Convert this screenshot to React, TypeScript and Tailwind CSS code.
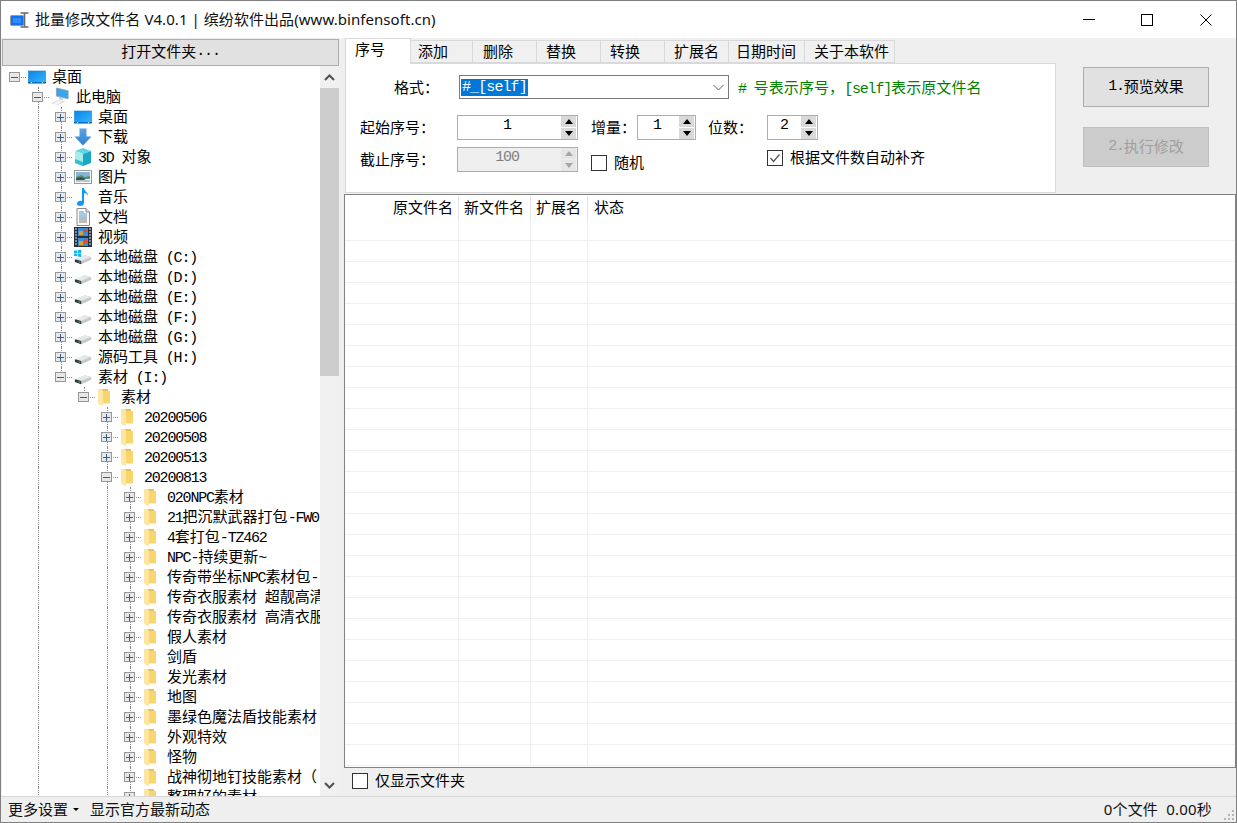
import React from "react";

type RowData = { l: number; t: string; icon: string; open?: boolean; guides?: number[]; end?: boolean };

// splits ascii runs so they get the half width mono face
const T = ({ s }: { s: string }) => (
    <>
        {s.split(/([\x20-\x7e]+)/).map((p, i) =>
            /^[\x20-\x7e]+$/.test(p) ? (
                <span key={i} className="font-['Liberation_Mono'] text-[15px] leading-none tracking-[-1.2px] whitespace-pre">
                    {p}
                </span>
            ) : (
                p
            ),
        )}
    </>
);

const DesktopIcon = () => (
    <svg width="18" height="18" viewBox="0 0 18 18">
        <defs>
            <linearGradient id="dk" x1="0" y1="0" x2="1" y2="1">
                <stop offset="0" stopColor="#0a86e6" />
                <stop offset="1" stopColor="#36b6ff" />
            </linearGradient>
        </defs>
        <rect x="0.5" y="3" width="17" height="12" fill="url(#dk)" stroke="#0f7fd2" strokeWidth="0.6" />
        <rect x="0" y="14" width="18" height="1.4" fill="#0b6fc0" />
        <rect x="3" y="14.2" width="1" height="1" fill="#fff" />
        <rect x="14" y="14.2" width="1" height="1" fill="#fff" />
    </svg>
);

const PcIcon = () => (
    <svg width="20" height="20" viewBox="0 0 20 20">
        <path d="M6 0l13 3v9L6 9z" fill="#3aa5ec" stroke="#8a98a4" strokeWidth="0.8" />
        <path d="M9 9.500l4 1v3l-4-1z" fill="#c4cad0" />
        <path d="M0 17l8-4 8 2-8 4z" fill="#d9dcdf" />
        <path d="M2 17l6-3 5 1.300-6 3z" fill="#f4f5f6" />
    </svg>
);

const ArrowIcon = () => (
    <svg width="18" height="18" viewBox="0 0 18 18">
        <defs>
            <linearGradient id="dl" x1="0" y1="0" x2="0" y2="1">
                <stop offset="0" stopColor="#5aa5e6" />
                <stop offset="1" stopColor="#2d7fd0" />
            </linearGradient>
        </defs>
        <path d="M5.5 0.5h7v8h5L9 17.5 0.5 8.5h5z" fill="url(#dl)" />
    </svg>
);

const CubeIcon = () => (
    <svg width="18" height="18" viewBox="0 0 18 18">
        <path d="M9 0l8 3-8 3-8-3z" fill="#5fd6e6" />
        <path d="M1 3l8 3v12l-8-3z" fill="#a9ece8" />
        <path d="M17 3L9 6v12l8-3z" fill="#1aa6c4" />
        <path d="M1 11l8 3v4l-8-3z" fill="#2fc0d2" />
    </svg>
);

const PictureIcon = () => (
    <svg width="18" height="18" viewBox="0 0 18 18">
        <rect x="0.5" y="2.5" width="17" height="13" fill="#fff" stroke="#9a9a9a" />
        <rect x="2" y="4" width="14" height="5" fill="#86b6d8" />
        <path d="M2 9l5-2 4 2 5-1v3H2z" fill="#5d8f80" />
        <path d="M2 10l5-1 5 2-2 1H2z" fill="#2f5a4c" />
        <rect x="2" y="12" width="14" height="2" fill="#b9c6c6" />
    </svg>
);

const NoteIcon = () => (
    <svg width="18" height="18" viewBox="0 0 18 18">
        <path d="M8 0h2c0 3 4 4 4 8-1-2-2-3-4-3v10c0 2-2 3-4 3s-3-1-3-2.500 2-3.500 5-2.500z" fill="#0f9af0" />
    </svg>
);

const DocIcon = () => (
    <svg width="18" height="18" viewBox="0 0 18 18">
        <path d="M3 0.500h9l3.500 3.500v13.500H3z" fill="#fafafa" stroke="#8a8a8a" />
        <path d="M12 0.500v3.500h3.500" fill="#dcdcdc" stroke="#8a8a8a" />
        <path d="M5 4h5M5 6h8M5 8h8" stroke="#4a9ad4" />
        <path d="M5 10h8M5 12h8M5 14h8" stroke="#7c7c7c" />
    </svg>
);

const FilmIcon = () => (
    <svg width="18" height="20" viewBox="0 0 18 20">
        <rect x="0" y="0" width="18" height="20" fill="#26303c" />
        <rect x="4" y="1" width="10" height="8" fill="#3a8edc" />
        <rect x="4" y="11" width="10" height="8" fill="#3a8edc" />
        <rect x="5" y="4" width="4" height="4" fill="#d8a030" />
        <rect x="9" y="2" width="4" height="3" fill="#d85030" />
        <rect x="5" y="14" width="4" height="4" fill="#d8a030" />
        <rect x="10" y="12" width="3" height="4" fill="#d85030" />
        <path d="M1 2h2M1 5h2M1 8h2M1 11h2M1 14h2M1 17h2M15 2h2M15 5h2M15 8h2M15 11h2M15 14h2M15 17h2" stroke="#e6e6e6" />
    </svg>
);

const DriveIcon = ({ win }: { win?: boolean }) => (
    <svg width="20" height="20" viewBox="0 0 20 20">
        <path d="M1 13l11-5 7 2v3L8 18l-7-3z" fill="#c4c7ca" />
        <path d="M1 12.500l11-4.500 7 2-11 4.500z" fill="#e6e8ea" />
        <path d="M1 12.500l7 2V18l-7-2.500z" fill="#32393d" />
        <rect x="5" y="15" width="2" height="1.200" fill="#36c060" />
        {win && <path d="M0 3l3.500-.5V5.500H0zM4.200 2.400L8 2v3.500H4.200zM0 6.200h3.500v3L0 8.800zM4.200 6.200H8V10l-3.800-.6z" fill="#12b4ef" />}
    </svg>
);

const FolderIcon = () => (
    <svg width="18" height="18" viewBox="0 0 18 18">
        <path d="M2 1h9v14H4z" fill="#eebf4e" />
        <path d="M6 3h7v12.500H6z" fill="#f9d56e" />
        <path d="M1 1h4l1 2v15l-4-1.500L1 15z" fill="#fde6a2" />
    </svg>
);

const AppIcon = () => (
    <svg width="20" height="20" viewBox="0 0 20 20">
        <rect x="0.500" y="5.500" width="13" height="10" rx="1" fill="#1472ea" stroke="#9a9a9a" />
        <rect x="3" y="8" width="8" height="5" fill="#2f8cff" />
        <path d="M10.500 3h8M10.500 17h8M14.500 3v14" stroke="#6a6a6a" strokeWidth="1.600" fill="none" />
    </svg>
);

const icons: Record<string, React.ReactNode> = {
    desktop: <DesktopIcon />,
    pc: <PcIcon />,
    arrow: <ArrowIcon />,
    cube: <CubeIcon />,
    pic: <PictureIcon />,
    note: <NoteIcon />,
    doc: <DocIcon />,
    film: <FilmIcon />,
    win: <DriveIcon win />,
    drive: <DriveIcon />,
    folder: <FolderIcon />,
};

const lv2 = { l: 2, guides: [1] };
const lv4 = { l: 4, icon: "folder", guides: [1] };
const lv5 = { l: 5, icon: "folder", guides: [1, 4] };

const rows: RowData[] = [
    { l: 0, t: "桌面", icon: "desktop", open: true },
    { l: 1, t: "此电脑", icon: "pc", open: true },
    { ...lv2, t: "桌面", icon: "desktop" },
    { ...lv2, t: "下载", icon: "arrow" },
    { ...lv2, t: "3D 对象", icon: "cube" },
    { ...lv2, t: "图片", icon: "pic" },
    { ...lv2, t: "音乐", icon: "note" },
    { ...lv2, t: "文档", icon: "doc" },
    { ...lv2, t: "视频", icon: "film" },
    { ...lv2, t: "本地磁盘 (C:)", icon: "win" },
    { ...lv2, t: "本地磁盘 (D:)", icon: "drive" },
    { ...lv2, t: "本地磁盘 (E:)", icon: "drive" },
    { ...lv2, t: "本地磁盘 (F:)", icon: "drive" },
    { ...lv2, t: "本地磁盘 (G:)", icon: "drive" },
    { ...lv2, t: "源码工具 (H:)", icon: "drive" },
    { ...lv2, t: "素材 (I:)", icon: "drive", open: true, end: true },
    { l: 3, t: "素材", icon: "folder", open: true, guides: [1], end: true },
    { ...lv4, t: "20200506" },
    { ...lv4, t: "20200508" },
    { ...lv4, t: "20200513" },
    { ...lv4, t: "20200813", open: true },
    { ...lv5, t: "020NPC素材" },
    { ...lv5, t: "21把沉默武器打包-FW0" },
    { ...lv5, t: "4套打包-TZ462" },
    { ...lv5, t: "NPC-持续更新~" },
    { ...lv5, t: "传奇带坐标NPC素材包-" },
    { ...lv5, t: "传奇衣服素材 超靓高清" },
    { ...lv5, t: "传奇衣服素材 高清衣服" },
    { ...lv5, t: "假人素材" },
    { ...lv5, t: "剑盾" },
    { ...lv5, t: "发光素材" },
    { ...lv5, t: "地图" },
    { ...lv5, t: "墨绿色魔法盾技能素材" },
    { ...lv5, t: "外观特效" },
    { ...lv5, t: "怪物" },
    { ...lv5, t: "战神彻地钉技能素材（" },
    { ...lv5, t: "整理好的素材" },
];

const TreeRow = ({ row }: { row: RowData }) => (
    <div className="flex h-5 shrink-0 items-center whitespace-nowrap pl-[2px]">
        {Array.from({ length: row.l }).map((_, i) => (
            <div key={i} className="h-full w-[23px] shrink-0">
                {row.guides?.includes(i) ? <div className="ml-[11px] h-full border-l border-dotted border-[#8a8a8a]" /> : null}
            </div>
        ))}
        <div className="relative flex h-full w-[23px] shrink-0 items-center pl-[5px]">
            {row.l > 0 && (
                <div
                    className={
                        row.end
                            ? "absolute left-[11px] top-0 h-1/2 border-l border-dotted border-[#8a8a8a]"
                            : "absolute left-[11px] inset-y-0 border-l border-dotted border-[#8a8a8a]"
                    }
                />
            )}
            <div className="relative flex h-[10px] w-[11px] items-center justify-center border border-[#969696] bg-[#e8e8e8]">
                <div className="absolute h-px w-[7px] bg-[#3a5a94]" />
                {!row.open && <div className="absolute h-[7px] w-px bg-[#3a5a94]" />}
            </div>
            <div className="ml-px w-[5px] border-t border-dotted border-[#8a8a8a]" />
        </div>
        <div className="ml-px flex h-5 w-[18px] shrink-0 items-center justify-center">{icons[row.icon]}</div>
        <div className={`mb-[2px] text-[15px] leading-[18px] text-black ${row.l === 1 ? "ml-[7px]" : "ml-[6px]"}`}>
            <T s={row.t} />
        </div>
    </div>
);

const Spin = ({ value, w, pr, off }: { value: string; w: string; pr: string; off?: boolean }) => (
    <div className={`flex h-[25px] items-center border border-[#adadad] ${w} ${off ? "bg-[#efefef]" : "bg-white"}`}>
        <div className={`flex-1 pb-[3px] text-center font-['Liberation_Mono'] text-[15px] tracking-[-1.2px] ${pr} ${off ? "text-[#7f7f7f]" : "text-black"}`}>
            {value}
        </div>
        <div className="mr-px flex h-[23px] w-[15px] flex-col gap-px">
            <div className={`flex flex-1 items-center justify-center ${off ? "bg-[#e6e6e6]" : "bg-[#d9d9d9]"}`}>
                <div className={`h-0 w-0 border-x-4 border-b-[5px] border-x-transparent ${off ? "border-b-[#a6a6a6]" : "border-b-black"}`} />
            </div>
            <div className={`flex flex-1 items-center justify-center ${off ? "bg-[#e6e6e6]" : "bg-[#d9d9d9]"}`}>
                <div className={`h-0 w-0 border-x-4 border-t-[5px] border-x-transparent ${off ? "border-t-[#a6a6a6]" : "border-t-black"}`} />
            </div>
        </div>
    </div>
);

const Check = ({ on }: { on?: boolean }) => (
    <div className="flex h-4 w-4 shrink-0 items-center justify-center border border-[#333333] bg-white">
        {on && (
            <svg width="14" height="14" viewBox="0 0 14 14">
                <path d="M2.500 7l3 3.500 6-7" fill="none" stroke="#555555" strokeWidth="1.300" />
            </svg>
        )}
    </div>
);

const tabs = [
    ["添加", "w-[62px] pl-[7px]"],
    ["删除", "w-[64px] pl-[10px]"],
    ["替换", "w-[64px] pl-[9px]"],
    ["转换", "w-[64px] pl-[9px]"],
    ["扩展名", "w-[64px] pl-[9px]"],
    ["日期时间", "w-[76px] pl-[7px]"],
    ["关于本软件", "w-[90px] pl-[9px]"],
];

export default function App() {
    return (
        <div className="flex h-[823px] w-[1237px] flex-col overflow-hidden border border-[#7f7f7f] bg-[#efefef] font-['Noto_Sans_CJK_SC',sans-serif] text-[15px] text-black">
            {/* title bar */}
            <div className="flex h-[37px] shrink-0 items-center bg-white">
                <div className="ml-[9px] mr-[5px]">
                    <AppIcon />
                </div>
                <span className="font-['Noto_Sans','Noto_Sans_CJK_SC',sans-serif] text-[15px] tracking-[0.06px] text-[#111111]">
                    批量修改文件名 V4.0.1 | 缤纷软件出品(www.binfensoft.cn)
                </span>
                <div className="ml-auto flex h-full items-center">
                    <div className="flex h-full w-[58px] items-center justify-center">
                        <div className="h-px w-3 bg-black" />
                    </div>
                    <div className="flex h-full w-[58px] items-center justify-center">
                        <div className="h-3 w-3 border border-black" />
                    </div>
                    <div className="flex h-full w-[60px] items-center justify-center">
                        <svg width="12" height="12" viewBox="0 0 12 12">
                            <path d="M0.500 0.500l11 11M11.500 0.500l-11 11" stroke="#000" fill="none" />
                        </svg>
                    </div>
                </div>
            </div>

            <div className="flex min-h-0 flex-1">
                {/* left pane */}
                <div className="flex w-[338px] shrink-0 flex-col pl-px">
                    <div className="mt-px flex h-[27px] shrink-0 items-center justify-center border border-[#adadad] bg-[#e1e1e1] pb-[2px] text-[15px]">
                        <T s="打开文件夹..." />
                    </div>
                    <div className="flex min-h-0 flex-1">
                        <div className="min-w-0 flex-1 overflow-hidden bg-white pt-px">
                            {rows.map((r) => (
                                <TreeRow key={r.t + r.l + r.icon} row={r} />
                            ))}
                        </div>
                        <div className="flex w-[19px] shrink-0 flex-col bg-[#f0f0f0]">
                            <div className="flex h-[22px] items-center justify-center">
                                <svg width="11" height="7" viewBox="0 0 11 7">
                                    <path d="M1 6l4.500-4.500L10 6" fill="none" stroke="#505050" strokeWidth="2" />
                                </svg>
                            </div>
                            <div className="h-[288px] bg-[#cdcdcd]" />
                            <div className="mt-auto flex h-[22px] items-center justify-center">
                                <svg width="11" height="7" viewBox="0 0 11 7">
                                    <path d="M1 1l4.500 4.500L10 1" fill="none" stroke="#505050" strokeWidth="2" />
                                </svg>
                            </div>
                        </div>
                    </div>
                </div>

                {/* right pane */}
                <div className="ml-[5px] flex min-w-0 flex-1 flex-col">
                    <div className="flex h-[156px] shrink-0">
                        <div className="mb-px ml-px flex w-[711px] shrink-0 flex-col">
                            <div className="flex h-[26px] shrink-0">
                                <div className="z-10 flex h-[26px] w-[66px] items-center border-x border-t border-[#d9d9d9] bg-white pb-[4px] pl-[9px]">序号</div>
                                {tabs.map(([name, w]) => (
                                    <div
                                        key={name}
                                        className={`mt-[2px] flex h-[23px] items-center border-y border-r border-[#d9d9d9] bg-[#f0f0f0] ${w}`}
                                    >
                                        {name}
                                    </div>
                                ))}
                            </div>
                            <div className="-mt-px flex-1 border border-[#d9d9d9] bg-white pt-[11px]">
                                <div className="flex h-6 items-center">
                                    <div className="ml-[48px] w-[65px]">格式：</div>
                                    <div className="flex h-6 w-[270px] items-center border border-[#7a7a7a] pl-px">
                                        <span className="bg-[#0078d7] px-px font-['Liberation_Mono'] text-[15px] leading-[17px] tracking-[-0.9px] text-white">#_[self]</span>
                                        <svg className="ml-auto mr-[4px]" width="11" height="7" viewBox="0 0 11 7">
                                            <path d="M0.500 1l5 5 5-5" fill="none" stroke="#606060" />
                                        </svg>
                                    </div>
                                    <div className="ml-[9px] text-[15px] tracking-[0.1px] text-[#008000]">
                                        <T s="# 号表示序号，[self]表示原文件名" />
                                    </div>
                                </div>
                                <div className="mt-[16px] flex h-[25px] items-center">
                                    <div className="ml-[14px] w-[97px]">起始序号：</div>
                                    <Spin value="1" w="w-[121px]" pr="pr-[5px]" />
                                    <div className="ml-[13px] w-[46px]">增量：</div>
                                    <Spin value="1" w="w-[59px]" pr="pr-[3px]" />
                                    <div className="ml-[12px] w-[59px]">位数：</div>
                                    <Spin value="2" w="w-[51px]" pr="pr-px" />
                                </div>
                                <div className="mt-[7px] flex h-[25px] items-center">
                                    <div className="ml-[14px] w-[97px]">截止序号：</div>
                                    <Spin value="100" w="w-[121px]" pr="pr-[5px]" off />
                                    <div className="ml-[13px] mt-[6px] flex w-[176px] items-center gap-[7px]">
                                        <Check />
                                        <span>随机</span>
                                    </div>
                                    <div className="-mt-[4px] flex items-center gap-[7px]">
                                        <Check on />
                                        <span>根据文件数自动补齐</span>
                                    </div>
                                </div>
                            </div>
                        </div>
                        <div className="ml-[27px] flex flex-col gap-[20px] pt-[29px]">
                            <div className="flex h-[40px] w-[126px] items-center justify-center border border-[#adadad] bg-[#e1e1e1] pb-[2px]">
                                <T s="1.预览效果" />
                            </div>
                            <div className="flex h-[40px] w-[126px] items-center justify-center border border-[#bfbfbf] bg-[#cccccc] pb-[2px] text-[#a0a0a0]">
                                <T s="2.执行修改" />
                            </div>
                        </div>
                    </div>

                    {/* file list */}
                    <div className="flex h-[574px] shrink-0 flex-col overflow-hidden border border-[#828282] bg-white">
                        <div className="grid h-[25px] shrink-0 grid-cols-[114px_72px_57px_1fr] items-center">
                            <div className="border-r border-[#e5e5e5] pb-[2px] pr-[5px] text-right leading-[22px]">原文件名</div>
                            <div className="border-r border-[#e5e5e5] pb-[2px] pl-[5px] leading-[22px]">新文件名</div>
                            <div className="border-r border-[#e5e5e5] pb-[2px] pl-[5px] leading-[22px]">扩展名</div>
                            <div className="pb-[2px] pl-[6px] leading-[22px]">状态</div>
                        </div>
                        {Array.from({ length: 26 }).map((_, i) => (
                            <div key={i} className="grid h-[21px] shrink-0 grid-cols-[114px_72px_57px_1fr] border-b border-[#f0f0f0]">
                                <div className="border-r border-[#f0f0f0]" />
                                <div className="border-r border-[#f0f0f0]" />
                                <div className="border-r border-[#f0f0f0]" />
                                <div />
                            </div>
                        ))}
                    </div>
                    <div className="flex flex-1 items-center gap-[7px] pb-[2px] pl-[8px]">
                        <Check />
                        <span className="mb-[2px]">仅显示文件夹</span>
                    </div>
                </div>
            </div>

            {/* status bar */}
            <div className="flex h-[26px] shrink-0 items-center border-t border-[#d7d7d7] bg-[#efefef] text-[15px] text-[#111111]">
                <span className="ml-[7px]">更多设置</span>
                <div className="ml-[5px] h-0 w-0 border-x-[3px] border-t-[3px] border-x-transparent border-t-black" />
                <span className="ml-[11px]">显示官方最新动态</span>
                <span className="ml-auto font-['Noto_Sans','Noto_Sans_CJK_SC',sans-serif] tracking-[0.2px] whitespace-pre">0个文件  0.00秒</span>
                <div className="ml-[12px] mr-[2px] grid grid-cols-3 gap-[2px] self-end pb-[2px]">
                    <i />
                    <i />
                    <i className="h-[2px] w-[2px] bg-[#b5b5b5]" />
                    <i />
                    <i className="h-[2px] w-[2px] bg-[#b5b5b5]" />
                    <i className="h-[2px] w-[2px] bg-[#b5b5b5]" />
                    <i className="h-[2px] w-[2px] bg-[#b5b5b5]" />
                    <i className="h-[2px] w-[2px] bg-[#b5b5b5]" />
                    <i className="h-[2px] w-[2px] bg-[#b5b5b5]" />
                </div>
            </div>
        </div>
    );
}
